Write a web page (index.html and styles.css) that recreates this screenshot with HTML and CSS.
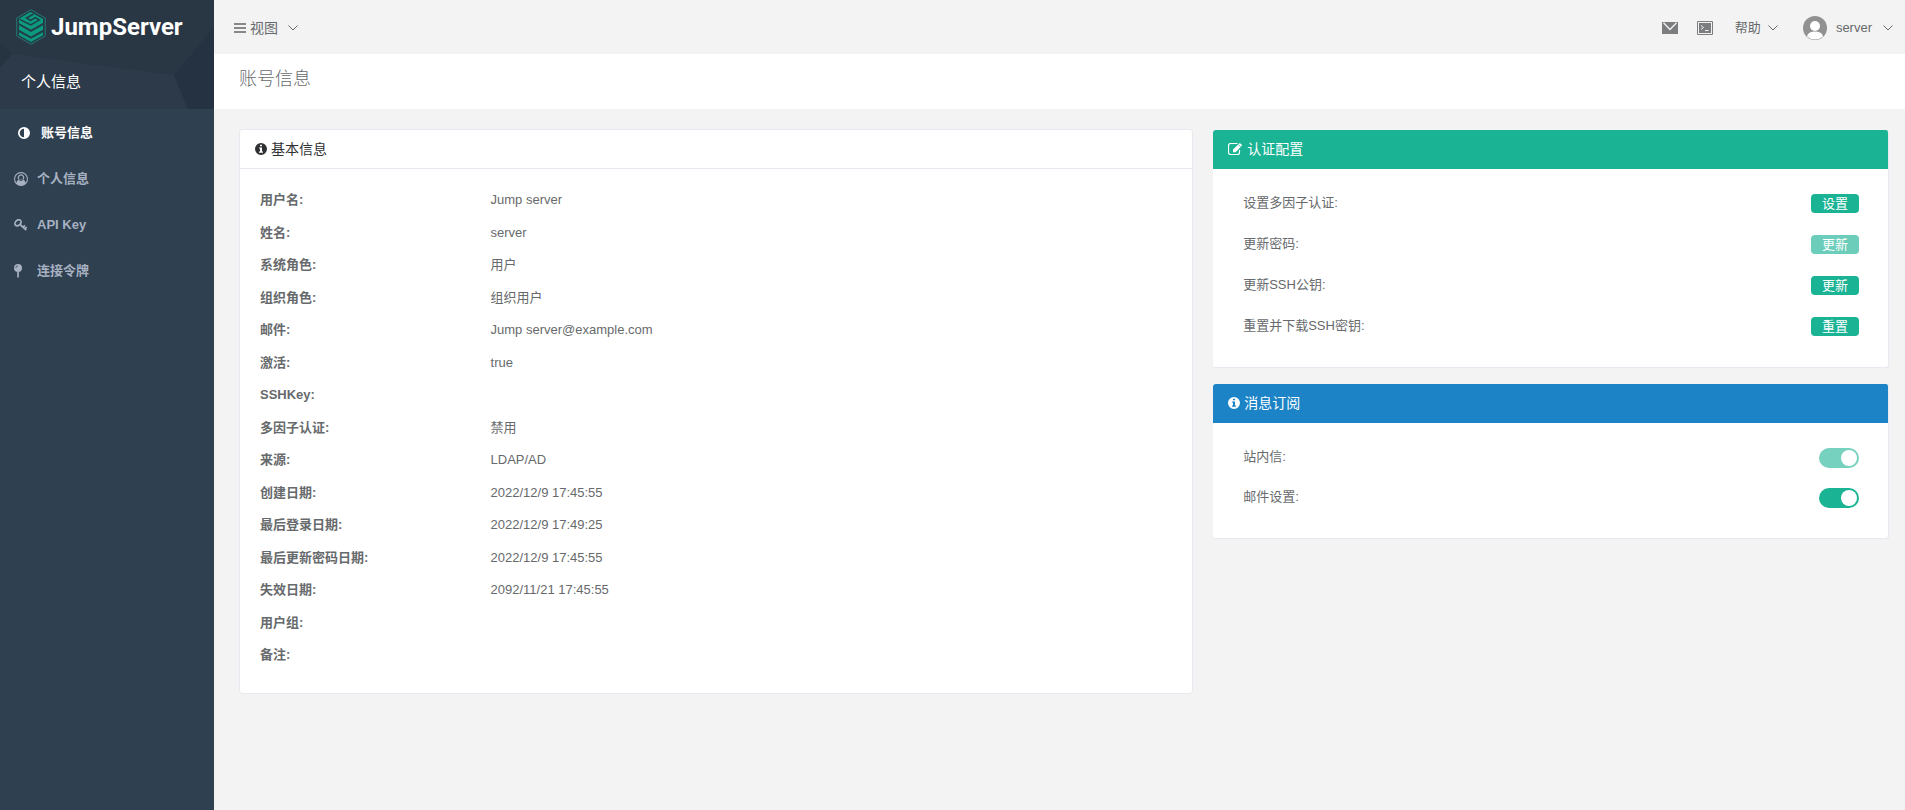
FILE: index.html
```html
<!DOCTYPE html>
<html lang="zh-CN">
<head>
<meta charset="utf-8">
<title>JumpServer</title>
<link rel="stylesheet" href="styles.css">
</head>
<body>
<svg class="defs" aria-hidden="true">
  <symbol id="chevron" viewBox="0 0 10 6"><path d="M.5.5 5 5 9.500.5" fill="none" stroke="currentColor"/></symbol>
  <symbol id="info" viewBox="0 0 12 12"><path fill="currentColor" fill-rule="evenodd" d="M6 0a6 6 0 1 1 0 12A6 6 0 0 1 6 0zM5 1.700v1.600h2V1.700zM4 4.500v1h1v3H4v1.200h4V8.500H7v-4z"/></symbol>
</svg>
<div class="app">
  <aside class="sidebar">
    <div class="side-head">
      <svg class="facets" viewBox="0 0 214 109" preserveAspectRatio="none" aria-hidden="true">
        <path fill="#293644" d="M0 0h214v109H0z"/>
        <path fill="#263341" d="M0 42 12 54 0 68z"/>
        <path fill="#2d3a49" d="M12 54 174 75 188 109H0V68z"/>
        <path fill="#253241" d="M174 75 214 27V109H188z"/>
      </svg>
      <a class="logo" href="#">
        <svg width="30" height="36" viewBox="0 0 30 36" aria-hidden="true">
          <path d="M15 .7 29.300 9v18L15 35.300.7 27V9z" fill="#233c4b" stroke="#27776f"/>
          <path d="M3 9.800 14 3.300l2.500 1.300-7.300 4.200 3.300 1.800L19 7l8 4.500v2.300L15 20.600 3 13.900v-2l12 6.300 7-4-3-1.700-5.500 3z" fill="#0b9a7c"/>
          <path d="M15 3.300 27 10v3.800l-12 6.800-12-6.700v-4z" fill="#0b9a7c"/>
          <path d="m17.500 5-7 4 4 2.400 4.800-2.700 4 2.400-8.500 4.900L3.500 10.300" fill="none" stroke="#233c4b" stroke-width="1.500"/>
          <path d="m3 16.200 12 6.700 12-6.700v4.600l-12 6.600-12-6.600z" fill="#0b9a7c"/>
          <path d="m3 23.200 12 6.500 12-6.500v3L15 33 3 26.200z" fill="#0b9a7c"/>
        </svg>
        <span>JumpServer</span>
      </a>
      <div class="side-title">个人信息</div>
    </div>
    <nav class="menu">
      <a class="active" href="#">
        <svg width="12" height="12" viewBox="0 0 12 12" aria-hidden="true"><path fill="currentColor" fill-rule="evenodd" d="M6 0a6 6 0 1 1 0 12A6 6 0 0 1 6 0zm0 1.700a4.300 4.300 0 0 0 0 8.600z"/></svg>账号信息</a>
      <a href="#">
        <svg width="14" height="14" viewBox="0 0 14 14" aria-hidden="true"><path fill="currentColor" fill-rule="evenodd" d="M7 0a7 7 0 1 1 0 14A7 7 0 0 1 7 0zm0 1.200A5.800 5.800 0 0 0 2.500 10.700Q2.800 8.300 4.600 7.700A3.200 3.200 0 1 1 9.400 7.700Q11.200 8.300 11.500 10.700A5.800 5.800 0 0 0 7 1.200z"/><path d="M4.600 7.500Q7 10 9.400 7.500" fill="none" stroke="#2f4050" stroke-width=".8"/><circle cx="7" cy="5.700" r="2.100" fill="#2f4050"/></svg>个人信息</a>
      <a href="#">
        <svg width="14" height="12" viewBox="0 0 14 12" aria-hidden="true" fill="none" stroke="currentColor"><ellipse cx="4" cy="3.800" rx="3.400" ry="2.500" transform="rotate(-42 4 3.800)" stroke-width="1.700"/><path d="m6 5.500 6.300 5.600M9.200 8.200l1.700-1.800M11 9.800l1.700-1.800" stroke-width="1.700"/></svg>API Key</a>
      <a href="#">
        <svg width="8" height="14" viewBox="0 0 8 14" aria-hidden="true"><circle cx="4" cy="4" r="4" fill="currentColor"/><path d="M1.800 4Q1.800 2 4 1.800" fill="none" stroke="#2f4050" stroke-width=".7"/><path d="M3.200 8h1.700v5.500H3.200z" fill="currentColor"/></svg>连接令牌</a>
    </nav>
  </aside>
  <div class="main">
    <header class="topbar">
      <button class="view" type="button">
        <svg width="12" height="10" viewBox="0 0 12 10" aria-hidden="true"><path d="M0 1h12M0 5h12M0 9h12" stroke="#86888a" stroke-width="2"/></svg>
        <span>视图</span>
        <svg class="chev" width="10" height="6"><use href="#chevron"/></svg>
      </button>
      <div class="tools">
        <button type="button" aria-label="站内信">
          <svg width="16" height="12" viewBox="0 0 16 12"><path fill="#7b7d7f" d="M0 0h16v12H0z"/><path d="m1.500.8 6.500 6.700L14.500.8" fill="none" stroke="#f3f3f3" stroke-width="1.300"/></svg>
        </button>
        <button type="button" aria-label="终端">
          <svg width="16" height="14" viewBox="0 0 16 14"><path d="M.5.500h15v13H.5z" fill="none" stroke="#7b7d7f"/><path fill="#7b7d7f" d="M2 2h12v10H2z"/><path d="m4 4.500 2.500 2L4 8.500M8 9.500h3.500" fill="none" stroke="#f3f3f3"/></svg>
        </button>
        <button class="help" type="button"><span>帮助</span><svg class="chev" width="10" height="6"><use href="#chevron"/></svg></button>
        <button class="user" type="button">
          <svg width="24" height="24" viewBox="0 0 24 24" aria-hidden="true"><circle cx="12" cy="12" r="12" fill="#919191"/><circle cx="12" cy="10" r="5" fill="#fff"/><path d="M4 20.500Q5 15.500 12 15.500t8 5A12 12 0 0 1 4 20.500z" fill="#fff"/></svg>
          <span>server</span>
          <svg class="chev" width="10" height="6"><use href="#chevron"/></svg>
        </button>
      </div>
    </header>
    <h1 class="page-title">账号信息</h1>
    <main class="content">
      <div class="col col-left">
        <section class="card">
          <h2 class="card-head plain"><svg width="12" height="12"><use href="#info"/></svg>基本信息</h2>
          <dl class="details">
            <dt>用户名:</dt><dd>Jump server</dd>
            <dt>姓名:</dt><dd>server</dd>
            <dt>系统角色:</dt><dd>用户</dd>
            <dt>组织角色:</dt><dd>组织用户</dd>
            <dt>邮件:</dt><dd>Jump server@example.com</dd>
            <dt>激活:</dt><dd>true</dd>
            <dt>SSHKey:</dt><dd></dd>
            <dt>多因子认证:</dt><dd>禁用</dd>
            <dt>来源:</dt><dd>LDAP/AD</dd>
            <dt>创建日期:</dt><dd>2022/12/9 17:45:55</dd>
            <dt>最后登录日期:</dt><dd>2022/12/9 17:49:25</dd>
            <dt>最后更新密码日期:</dt><dd>2022/12/9 17:45:55</dd>
            <dt>失效日期:</dt><dd>2092/11/21 17:45:55</dd>
            <dt>用户组:</dt><dd></dd>
            <dt>备注:</dt><dd></dd>
          </dl>
        </section>
      </div>
      <div class="col col-right">
        <section class="card">
          <h2 class="card-head green"><svg width="15" height="12" viewBox="0 0 15 12"><path d="M11.500 7v2.500a2 2 0 0 1-2 2h-7a2 2 0 0 1-2-2v-7a2 2 0 0 1 2-2h7" fill="none" stroke="currentColor" stroke-width="1.200"/><path d="M5 9.200V6.600L11.200.500q.6-.5 1.200 0l1.300 1.300q.5.600 0 1.200L7.500 9.200z" fill="currentColor"/><path d="m10.500 1.500 2.300 2.300" stroke="#1ab394" stroke-width=".7"/></svg>认证配置</h2>
          <div class="actions">
            <div class="row"><span>设置多因子认证:</span><button class="btn" type="button">设置</button></div>
            <div class="row"><span>更新密码:</span><button class="btn" type="button" disabled>更新</button></div>
            <div class="row"><span>更新SSH公钥:</span><button class="btn" type="button">更新</button></div>
            <div class="row"><span>重置并下载SSH密钥:</span><button class="btn" type="button">重置</button></div>
          </div>
        </section>
        <section class="card">
          <h2 class="card-head blue"><svg width="12" height="12"><use href="#info"/></svg>消息订阅</h2>
          <div class="actions switches">
            <div class="row"><label for="site-msg">站内信:</label><input class="switch" id="site-msg" type="checkbox" checked disabled></div>
            <div class="row"><label for="mail-msg">邮件设置:</label><input class="switch" id="mail-msg" type="checkbox" checked></div>
          </div>
        </section>
      </div>
    </main>
  </div>
</div>
</body>
</html>
```
FILE: styles.css
```css
* { box-sizing: border-box; }
body {
  margin: 0;
  background: #f3f3f3;
  color: #676a6c;
  font: 13px/20px "Liberation Sans", "Noto Sans CJK SC", sans-serif;
}
a { color: inherit; text-decoration: none; }
button { font: inherit; color: inherit; border: 0; background: none; padding: 0; cursor: pointer; }
svg { flex: none; display: block; }
.defs { position: absolute; width: 0; height: 0; }
.app { display: flex; min-height: 100vh; }

.sidebar { width: 214px; flex: none; background: #2f4050; }
.side-head { position: relative; }
.facets { position: absolute; inset: 0; width: 100%; height: 100%; }
.logo {
  position: relative;
  display: flex;
  align-items: center;
  gap: 5px;
  height: 54px;
  padding-left: 16px;
  color: #fff;
  font: bold 24px/36px Roboto, sans-serif;
}
.side-title {
  position: relative;
  height: 55px;
  padding-left: 21px;
  color: #fff;
  font-size: 15px;
  line-height: 55px;
}
.menu { padding-top: 1px; }
.menu a {
  display: grid;
  grid-template-columns: 14px 1fr;
  align-items: center;
  gap: 9px;
  height: 46px;
  padding-left: 14px;
  color: #a7b1c2;
  font-weight: bold;
}
.menu a.active { padding-left: 18px; color: #fff; }

.main { flex: 1; min-width: 0; }
.topbar {
  display: flex;
  align-items: center;
  justify-content: space-between;
  height: 54px;
  padding: 2px 12px 0 20px;
}
.view, .tools, .tools button { display: flex; align-items: center; }
.view { gap: 4px; font-size: 14px; }
.view .chev { margin-left: 6px; }
.tools { gap: 19px; }
.help { gap: 7px; margin-left: 3px; }
.user { gap: 9px; margin-left: 6px; }
.user .chev { margin-left: 2px; }
.page-title {
  margin: 0;
  height: 55px;
  padding-left: 25px;
  background: #fff;
  font-size: 18px;
  font-weight: 300;
  line-height: 50px;
}
.content { display: flex; align-items: flex-start; padding: 20px 6px 20px 15px; }
.col { padding: 0 10px; }
.col-left { width: 58.333%; }
.col-right { width: 41.667%; }
.card {
  margin-bottom: 16px;
  border: 1px solid #e7eaf0;
  border-radius: 3px;
  background: #fff;
  overflow: hidden;
}
.card-head {
  display: flex;
  align-items: center;
  gap: 4px;
  height: 39px;
  margin: 0;
  padding-left: 15px;
  font-size: 14px;
  font-weight: normal;
}
.plain { color: #303133; border-bottom: 1px solid #e7eaf0; }
.green, .blue { padding-bottom: 1px; color: #fff; }
.green { background: #1ab394; }
.blue { background: #1c84c6; }
.col-right .card { border-top: 0; border-left: 0; margin-top: 1px; }
.details {
  display: grid;
  grid-template-columns: 25% 75%;
  grid-auto-rows: 2.5em;
  margin: 0;
  padding: 15px 10px 21px 20px;
  line-height: 2.5;
}
.details dt { font-weight: bold; }
.details dd { margin: 0; }
.actions { padding: 14px 29px 20px 30px; }
.row { display: flex; align-items: center; justify-content: space-between; height: 41px; }
.row span, .row label { padding-bottom: 2px; }
.btn {
  width: 48px;
  height: 19px;
  border-radius: 4px;
  background: #1ab394;
  color: #fff;
  line-height: 19px;
}
.btn:disabled { background: #6cceba; }
.switches { padding-top: 15px; }
.switches .row { height: 40px; }
.switch {
  appearance: none;
  display: flex;
  justify-content: flex-end;
  width: 40px;
  height: 20px;
  margin: 0;
  padding: 2px;
  border-radius: 10px;
  background: #1ab394;
}
.switch::before { content: ""; width: 16px; height: 16px; border-radius: 50%; background: #fff; }
.switch:disabled { background: #76d1bf; }
```
